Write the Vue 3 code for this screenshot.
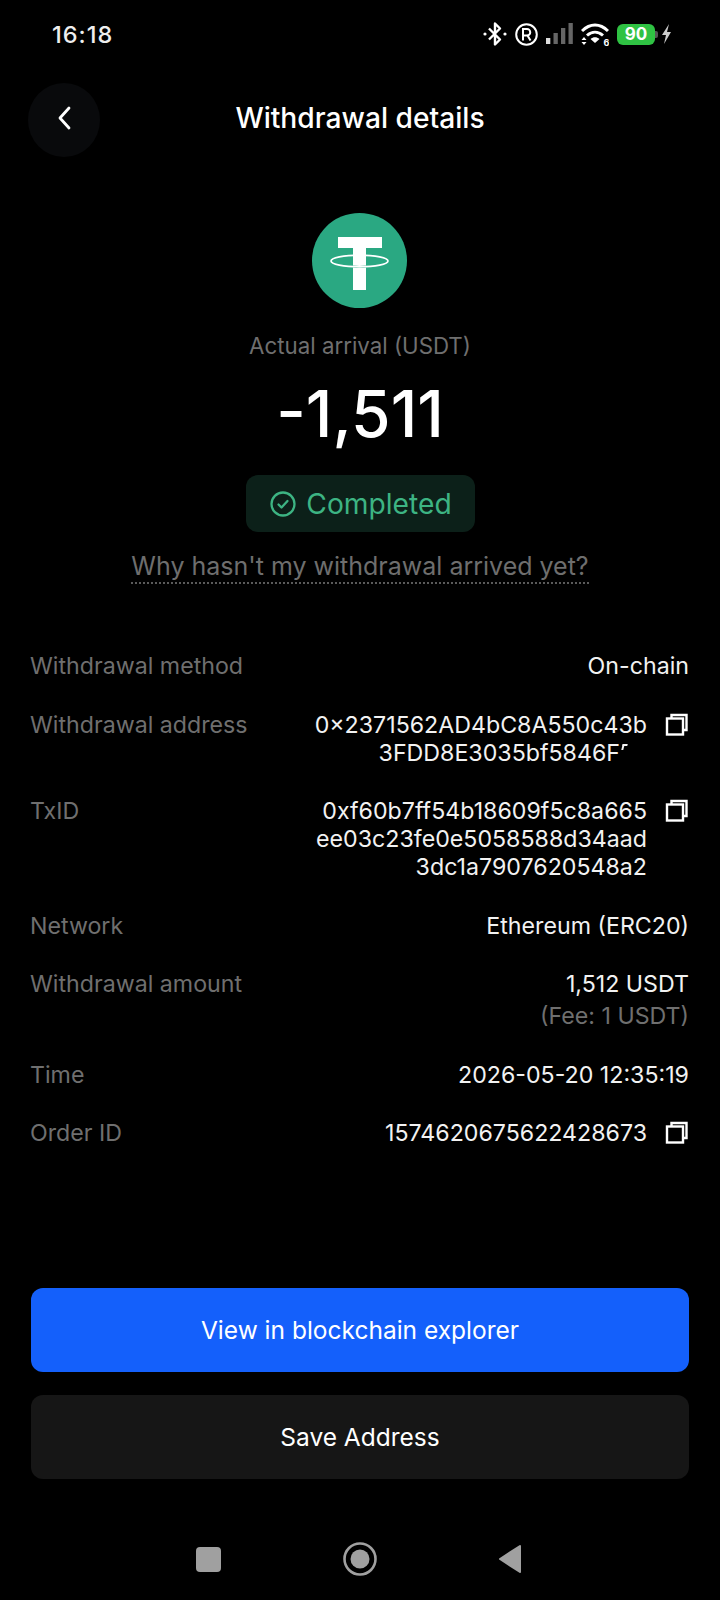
<template>
  <div class="page">
    <div class="status-bar">
      <span class="clock">16:18</span>
      <div class="status-icons">
        <svg width="24" height="26" viewBox="0 0 24 26" fill="none" stroke="#fff" stroke-width="2.400">
          <path d="M6 7.500l11 11-5 5V2.500l5 5-11 11" stroke-linejoin="round" />
          <circle cx="2" cy="13" r="1.600" fill="#fff" stroke="none" />
          <circle cx="22" cy="13" r="1.600" fill="#fff" stroke="none" />
        </svg>
        <svg width="23" height="23" viewBox="0 0 23 23" fill="none" stroke="#fff" stroke-width="2">
          <circle cx="11.500" cy="11.500" r="10.300" />
          <path d="M8 17.500V6h4a3.200 3.200 0 0 1 0 6.500H8M12.500 12.500l3 5" />
        </svg>
        <svg width="27" height="22" viewBox="0 0 27 22">
          <rect x="0" y="15" width="4.300" height="6" fill="#ddd" />
          <rect x="7.500" y="10" width="4.300" height="11" fill="#666" />
          <rect x="15" y="5" width="4.300" height="16" fill="#666" />
          <rect x="22.500" y="0" width="4.300" height="21" fill="#666" />
        </svg>
        <svg width="28" height="23" viewBox="0 0 28 23" fill="none" stroke="#fff" stroke-width="3">
          <path d="M1 8c8-8 18-8 26 0M6 12.500c5-4.500 11-4.500 16 0" />
          <path d="M9.500 16c2.800-2.200 6.200-2.200 9 0l-4.500 4z" fill="#fff" stroke="none" />
          <path d="M0.500 17l2.500-3 2.500 3zM0.500 19l2.500 3 2.500-3z" fill="#fff" stroke="none" />
          <text x="22.500" y="22.500" class="wifi-six" stroke="none" fill="#fff">6</text>
        </svg>
        <div class="battery"><span>90</span></div>
        <svg width="11" height="20" viewBox="0 0 11 20"><path d="M8 0L1 11h4l-2 9 7-12H6z" fill="#ccc" /></svg>
      </div>
    </div>

    <div class="top-nav">
      <button class="back-btn">
        <svg width="16" height="26" viewBox="0 0 16 26" fill="none" stroke="#fff" stroke-width="2.800" stroke-linecap="round" stroke-linejoin="round">
          <path d="M13 3L4 13l9 10" />
        </svg>
      </button>
      <h1>Withdrawal details</h1>
    </div>

    <div class="summary">
      <svg class="coin" width="95" height="95" viewBox="0 0 95 95">
        <circle cx="47.500" cy="47.500" r="47.500" fill="#2aa882" />
        <path d="M26 24h44v11H54v42H41V35H26z" fill="#fff" />
        <path d="M41 53.500c4 .6 9 .6 13 0" fill="none" stroke="#2aa882" stroke-width="1.800" />
        <ellipse cx="47.500" cy="48" rx="28.500" ry="5.800" fill="none" stroke="#fff" stroke-width="1.700" />
      </svg>
      <p class="label">Actual arrival (USDT)</p>
      <p class="amount">-1,511</p>
      <div class="badge">
        <svg width="26" height="26" viewBox="0 0 26 26" fill="none" stroke="#3db483" stroke-width="2.300">
          <circle cx="13" cy="13" r="11.500" />
          <path d="M8.500 13.500l3 3 6-6.500" stroke-linecap="round" stroke-linejoin="round" />
        </svg>
        <span>Completed</span>
      </div>
      <a class="why">Why hasn't my withdrawal arrived yet?</a>
    </div>

    <div class="rows">
      <div v-for="row in rows" :key="row.label" class="row">
        <span class="row-label">{{ row.label }}</span>
        <div class="row-value">
          <div class="value-text">
            <div v-for="(line, i) in row.lines" :key="line">{{ line }}<span v-if="row.cut && i === 1" class="cut"></span></div>
            <div v-if="row.note" class="note">{{ row.note }}</div>
          </div>
          <svg v-if="row.copy" class="copy" width="24" height="24" viewBox="0 0 24 24" fill="none" stroke="#fff" stroke-width="2.400">
            <path d="M6.500 5V2h15v15h-3" />
            <rect x="2" y="5.500" width="16" height="16" />
          </svg>
        </div>
      </div>
    </div>

    <div class="actions">
      <button class="btn primary">View in blockchain explorer</button>
      <button class="btn secondary">Save Address</button>
    </div>

    <div class="android-nav">
      <span class="nav-square"></span>
      <svg width="36" height="36" viewBox="0 0 36 36">
        <circle cx="18" cy="18" r="15.500" fill="none" stroke="#a0a0a0" stroke-width="2.600" />
        <circle cx="18" cy="18" r="9.500" fill="#a0a0a0" />
      </svg>
      <svg width="24" height="30" viewBox="0 0 24 30">
        <path d="M22 2L2 15l20 13z" fill="#a0a0a0" stroke="#a0a0a0" stroke-width="2" stroke-linejoin="round" />
      </svg>
    </div>
  </div>
</template>

<script setup>
const rows = [
  { label: 'Withdrawal method', lines: ['On-chain'] },
  { label: 'Withdrawal address', lines: ['0×2371562AD4bC8A550c43b', '3FDD8E3035bf5846F'], copy: true, cut: true },
  { label: 'TxID', lines: ['0xf60b7ff54b18609f5c8a665', 'ee03c23fe0e5058588d34aad', '3dc1a7907620548a2'], copy: true },
  { label: 'Network', lines: ['Ethereum (ERC20)'] },
  { label: 'Withdrawal amount', lines: ['1,512 USDT'], note: '(Fee: 1 USDT)' },
  { label: 'Time', lines: ['2026-05-20 12:35:19'] },
  { label: 'Order ID', lines: ['1574620675622428673'], copy: true }
]
</script>

<style>
body { margin: 0; background: #000; }
</style>

<style scoped>
.page { width: 720px; height: 1600px; background: #000; color: #fff; font-family: Inter, "Liberation Sans", sans-serif; display: flex; flex-direction: column; overflow: hidden; }
.status-bar { height: 68px; display: flex; align-items: center; justify-content: space-between; padding: 0 48px 0 52px; box-sizing: border-box; }
.clock { font-size: 23.500px; font-weight: 500; color: #eee; letter-spacing: 1px; }
.status-icons { display: flex; align-items: center; gap: 8px; }
.wifi-six { font-size: 9px; font-weight: 700; font-family: Inter, sans-serif; }
.battery { width: 38px; height: 21px; border-radius: 6px; background: #2fc243; display: flex; align-items: center; justify-content: center; position: relative; margin-right: -2px; }
.battery span { font-size: 17px; font-weight: 700; color: #fff; }
.battery::after { content: ""; position: absolute; right: -3px; top: 7px; width: 3px; height: 7px; background: #555; border-radius: 0 2px 2px 0; }
.top-nav { height: 100px; display: flex; align-items: center; justify-content: center; position: relative; }
.top-nav h1 { margin: 0; font-size: 28.200px; font-weight: 500; }
.back-btn { position: absolute; left: 28px; top: 15px; width: 72px; height: 74px; border-radius: 50%; border: 0; background: #090a0c; display: flex; align-items: center; justify-content: center; padding: 0 0 5px; }
.summary { display: flex; flex-direction: column; align-items: center; padding-top: 45px; }
.coin { margin-right: 2px; }
.label { margin: 24px 0 0; font-size: 22.300px; line-height: 28px; color: #6f6f6f; }
.amount { margin: 16px 0 0; font-size: 64px; line-height: 76px; font-weight: 500; }
.badge { margin-top: 23px; width: 229px; height: 57px; border-radius: 12px; background: #0c2019; display: flex; align-items: center; justify-content: center; gap: 10px; padding-left: 2px; box-sizing: border-box; color: #3db483; font-size: 28.200px; }
.why { margin-top: 19px; font-size: 25px; line-height: 30px; color: #6e6e6e; border-bottom: 2px dotted #5a5a5a; padding-bottom: 1px; }
.rows { margin-top: 68px; padding: 0 31px 0 30px; display: flex; flex-direction: column; gap: 30.500px; }
.row { display: flex; justify-content: space-between; font-size: 23.200px; line-height: 28px; }
.row-label { color: #6f6f6f; }
.row-value { display: flex; align-items: flex-start; gap: 18px; }
.value-text { text-align: right; color: #f2f2f2; }
.note { color: #6f6f6f; margin-top: 4px; }
.cut { display: inline-block; width: 5px; height: 6px; margin: 0 20px 0 2px; border-top: 2px solid #f2f2f2; border-left: 2px solid #f2f2f2; box-sizing: border-box; transform: skewX(-14deg); vertical-align: 11px; }
.copy { margin-top: 2px; flex: none; }
.actions { margin-top: auto; padding: 0 31px; display: flex; flex-direction: column; gap: 23px; }
.btn { height: 84px; border: 0; border-radius: 12px; color: #fff; font-family: inherit; font-size: 24.500px; font-weight: 400; }
.primary { background: #1460fb; }
.secondary { background: #161616; }
.android-nav { height: 121px; padding: 39px 198px 0 196px; display: flex; align-items: center; justify-content: space-between; box-sizing: border-box; }
.nav-square { width: 25px; height: 25px; border-radius: 4px; background: #a0a0a0; }
</style>
